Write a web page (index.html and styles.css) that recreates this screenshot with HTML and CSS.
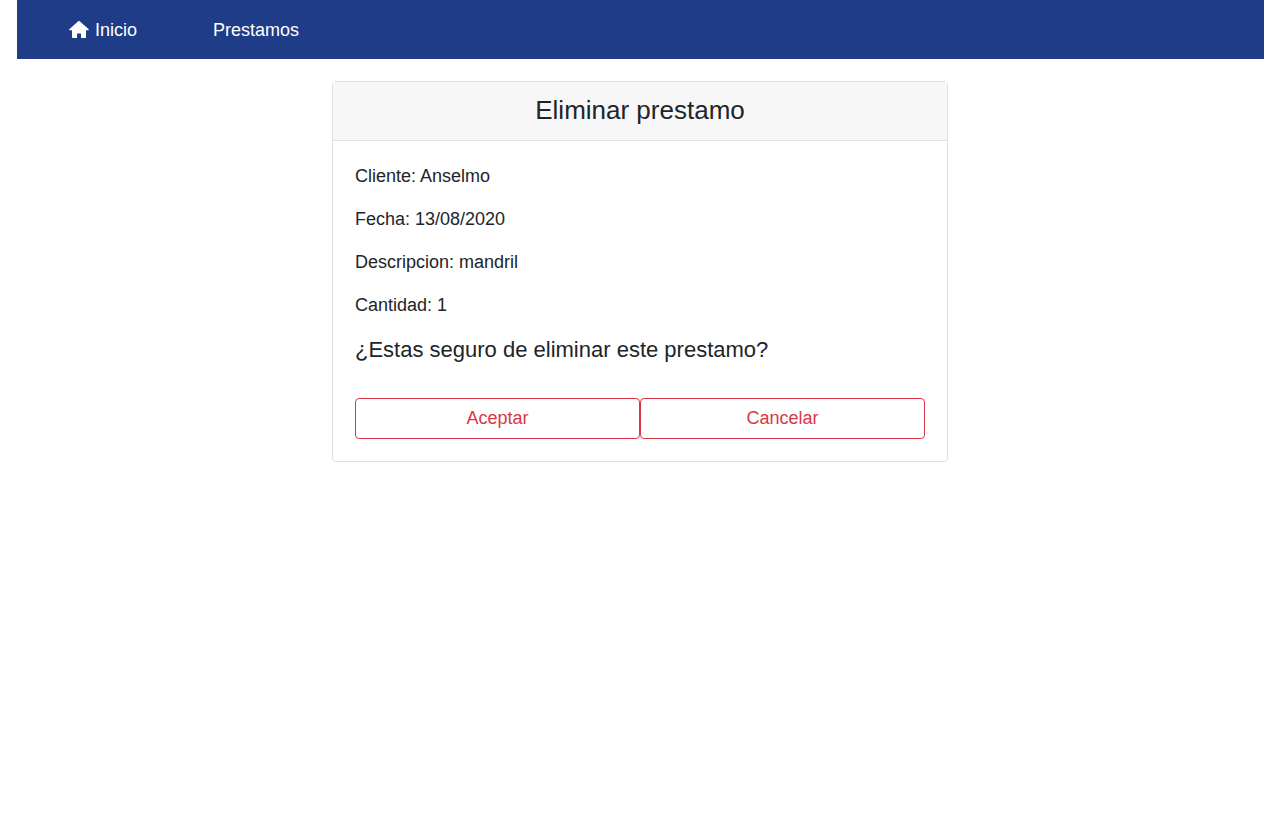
FILE: index.html
```html
<!DOCTYPE html>
<html lang="es">
<head>
<meta charset="utf-8">
<meta name="viewport" content="width=device-width, initial-scale=1">
<title>Eliminar prestamo</title>
<link rel="stylesheet" href="styles.css">
</head>
<body>
<nav class="navbar">
  <a class="nav-link" href="#inicio">
    <svg class="nav-icon" viewBox="0 0 20 20" aria-hidden="true"><path d="M9.200.3a1.200 1.200 0 0 1 1.600 0L19.700 8.200Q20.200 9 19.300 9.300H17V16.200Q17 17 16.200 17H12V12.500H8V17H3.800Q3 17 3 16.200V9.300H.7Q-.2 9 .3 8.200Z"/></svg>
    <span>Inicio</span>
  </a>
  <a class="nav-link" href="#prestamos">Prestamos</a>
</nav>
<main class="card">
  <h1 class="card-header">Eliminar prestamo</h1>
  <div class="card-body">
    <p class="detail">Cliente: Anselmo</p>
    <p class="detail">Fecha: 13/08/2020</p>
    <p class="detail">Descripcion: mandril</p>
    <p class="detail">Cantidad: 1</p>
    <h2 class="question">¿Estas seguro de eliminar este prestamo?</h2>
    <div class="actions">
      <button class="btn" type="button">Aceptar</button>
      <button class="btn" type="button">Cancelar</button>
    </div>
  </div>
</main>
</body>
</html>
```

FILE: styles.css
```css
* {
  box-sizing: border-box;
}

body {
  margin: 0;
  background: #fff;
  color: #212529;
  font: 18px/27px "Liberation Sans", Arial, sans-serif;
}

.navbar {
  display: flex;
  align-items: center;
  gap: 76px;
  margin: 0 16px 0 17px;
  padding: 17px 52px 15px;
  background: #1f3c88;
}

.nav-link {
  display: flex;
  align-items: center;
  gap: 6px;
  color: #fff;
  text-decoration: none;
}

.nav-icon {
  width: 20px;
  height: 20px;
  fill: currentColor;
}

.card {
  width: calc(50% - 24px);
  margin: 22px auto 0;
  border: 1px solid #dfdfdf;
  border-radius: 4px;
  background: #fff;
}

.card-header {
  margin: 0;
  padding: 11px 22px 13px;
  border-bottom: 1px solid #dfdfdf;
  background: #f7f7f7;
  font-size: 26px;
  line-height: 34px;
  font-weight: 400;
  text-align: center;
}

.card-body {
  padding: 22px;
}

.detail {
  margin: 0 0 16px;
}

.question {
  margin: 0 0 33px;
  font-size: 22px;
  line-height: 30px;
  font-weight: 400;
}

.actions {
  display: flex;
}

.btn {
  flex: 1;
  padding: 6px 12px;
  border: 1px solid #dc3545;
  border-radius: 4px;
  background: transparent;
  color: #dc3545;
  font: inherit;
  cursor: pointer;
}
```
